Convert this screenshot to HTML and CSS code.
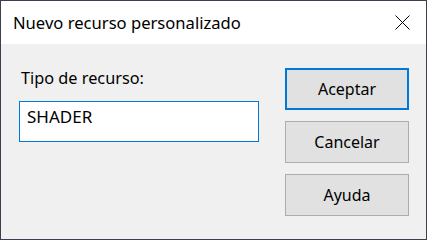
FILE: index.html
```html
<!DOCTYPE html>
<html>
<head>
<meta charset="utf-8">
<link rel="stylesheet" href="styles.css">
</head>
<body>
<div class="window">
  <div class="titlebar">
    <span class="title">Nuevo recurso personalizado</span>
    <svg class="close" width="15" height="15" viewBox="0 0 15 15">
      <path d="M0.5 0.5 L14.5 14.5 M14.5 0.5 L0.5 14.5" stroke="#000" stroke-width="1" fill="none"/>
    </svg>
  </div>
  <div class="content">
    <div class="left">
      <div class="label">Tipo de recurso:</div>
      <div class="input">SHADER</div>
    </div>
    <div class="buttons">
      <div class="btn default">Aceptar</div>
      <div class="btn">Cancelar</div>
      <div class="btn">Ayuda</div>
    </div>
  </div>
</div>
</body>
</html>
```
FILE: styles.css
```css
html, body {
  margin: 0;
  padding: 0;
}
body {
  font-family: "Noto Sans", "Open Sans", sans-serif;
  font-size: 16px;
  line-height: 22px;
  color: #000;
}
.window {
  width: 427px;
  height: 240px;
  box-sizing: border-box;
  border: 1px solid #3b4050;
  background: #f0f0f0;
  display: flex;
  flex-direction: column;
}
.titlebar {
  height: 43px;
  background: #fff;
  display: flex;
  align-items: center;
  justify-content: space-between;
  padding-left: 12px;
  padding-right: 16px;
  flex: none;
}
.title {
  font-size: 16.6px;
}
.close {
  display: block;
}
.content {
  display: flex;
  padding: 23px 17px 0 18px;
}
.left {
  width: 240px;
  display: flex;
  flex-direction: column;
}
.label {
  padding-left: 2px;
  font-size: 16.3px;
}
.input {
  margin-top: 12px;
  height: 41px;
  box-sizing: border-box;
  border: 1px solid #0078d7;
  background: #fff;
  padding: 4px 0 0 7px;
  font-size: 17px;
}
.buttons {
  margin-left: auto;
  width: 124px;
  display: flex;
  flex-direction: column;
  gap: 11px;
  padding-top: 1px;
}
.btn {
  height: 42px;
  box-sizing: border-box;
  border: 1px solid #adadad;
  background: #e1e1e1;
  display: flex;
  align-items: center;
  justify-content: center;
}
.btn.default {
  border: 2px solid #0078d7;
}
```
